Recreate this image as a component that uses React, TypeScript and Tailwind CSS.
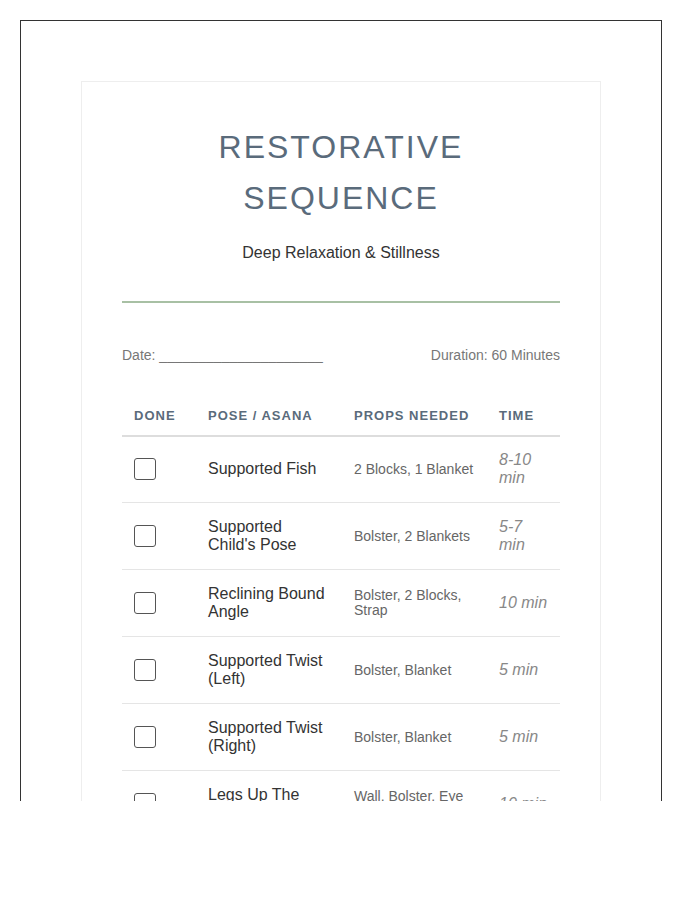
import React from "react";

const rows = [
  ["Supported Fish", "2 Blocks, 1 Blanket", "8-10 min"],
  ["Supported Child's Pose", "Bolster, 2 Blankets", "5-7 min"],
  ["Reclining Bound Angle", "Bolster, 2 Blocks, Strap", "10 min"],
  ["Supported Twist (Left)", "Bolster, Blanket", "5 min"],
  ["Supported Twist (Right)", "Bolster, Blanket", "5 min"],
  ["Legs Up The Wall", "Wall, Bolster, Eye Pillow", "10 min"],
];

export default function App() {
  return (
    <div className="bg-white pt-[20px] px-[20px] h-[900px]" style={{ fontFamily: '"Liberation Sans", Arial, sans-serif' }}>
      <div className="w-[642px] h-[781px] overflow-hidden border-x border-t border-[#333]">
        <div className="mt-[60px] mx-[60px] w-[520px] border border-[#eee] px-[40px] pt-[40px] pb-10">
          <h1 className="text-center text-[32px] leading-[51px] tracking-[2px] text-[#5a6b7b] font-normal">RESTORATIVE<br />SEQUENCE</h1>
          <p className="text-center text-[16px] text-[#333] mt-[17px]">Deep Relaxation &amp; Stillness</p>
          <div className="mt-[36px] h-[2px] bg-[#a8c0a4]"></div>
          <div className="mt-[42px] flex justify-between text-[14px] text-[#777]">
            <span>Date: _____________________</span>
            <span>Duration: 60 Minutes</span>
          </div>
          <table className="mt-[34px] w-[438px] border-collapse table-fixed">
            <colgroup>
              <col className="w-[74px]" />
              <col className="w-[146px]" />
              <col className="w-[145px]" />
              <col className="w-[73px]" />
            </colgroup>
            <thead>
              <tr className="border-b-2 border-[#ddd]">
                {["Done", "Pose / Asana", "Props Needed", "Time"].map((h) => (
                  <th key={h} className="text-left uppercase text-[13px] font-bold tracking-[1px] text-[#5a6b7b] px-[12px] pt-[6px] pb-[9px]">{h}</th>
                ))}
              </tr>
            </thead>
            <tbody>
              {rows.map(([p, pr, t]) => (
                <tr key={p} className="border-b border-[#e5e5e5] h-[67px]">
                  <td className="px-[12px]"><div className="w-[22px] h-[22px] border border-[#555] rounded-[3px]"></div></td>
                  <td className="px-[12px] text-[16px] leading-[18px] text-[#333]">{p}</td>
                  <td className="px-[12px] text-[14px] leading-[15px] text-[#666]">{pr}</td>
                  <td className="px-[12px] text-[16px] leading-[18px] italic text-[#888]">{t}</td>
                </tr>
              ))}
            </tbody>
          </table>
        </div>
      </div>
    </div>
  );
}
